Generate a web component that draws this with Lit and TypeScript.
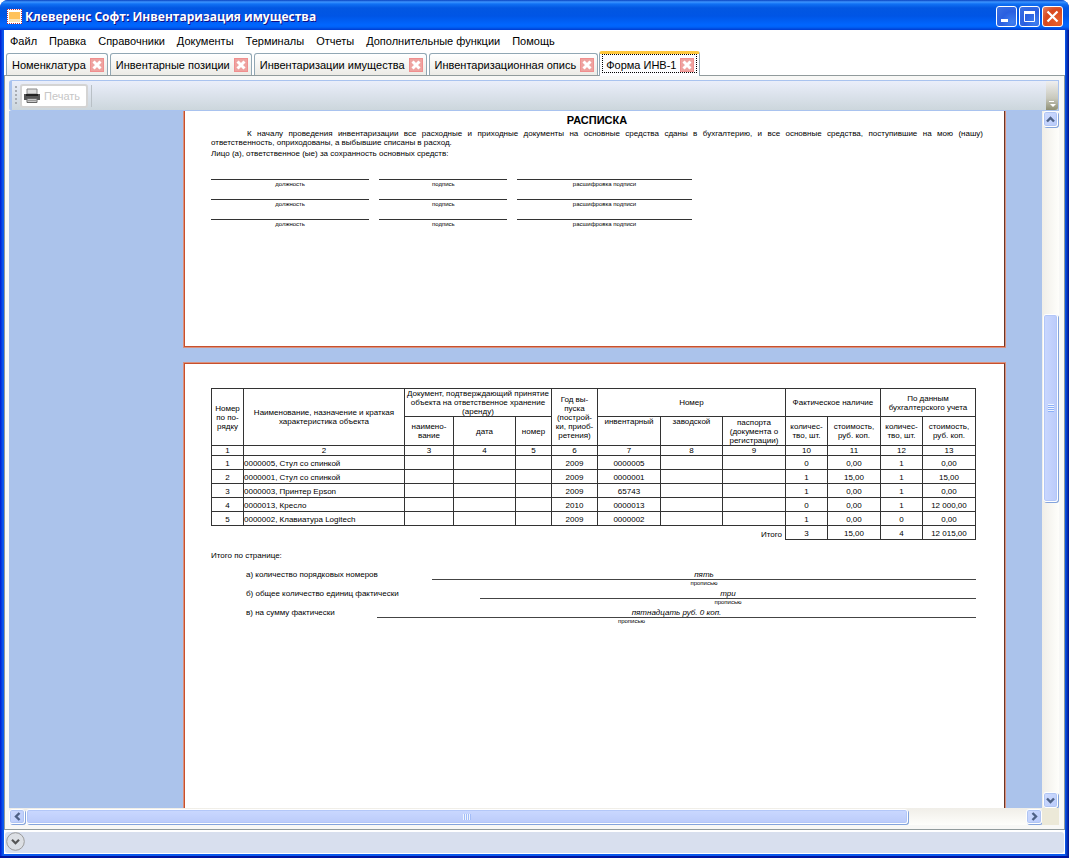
import { LitElement, html, css, svg } from "lit";
import { customElement, state } from "lit/decorators.js";
import { classMap } from "lit/directives/class-map.js";

const MENU = ["Файл", "Правка", "Справочники", "Документы", "Терминалы", "Отчеты", "Дополнительные функции", "Помощь"];
const TABS = ["Номенклатура", "Инвентарные позиции", "Инвентаризации имущества", "Инвентаризационная опись", "Форма ИНВ-1"];
const COLUMNS = [32, 161, 49, 62, 36, 46, 63, 62, 63, 42, 53, 42, 53];
const ROWS = [
  ["1", "0000005, Стул со спинкой", "", "", "", "2009", "0000005", "", "", "0", "0,00", "1", "0,00"],
  ["2", "0000001, Стул со спинкой", "", "", "", "2009", "0000001", "", "", "1", "15,00", "1", "15,00"],
  ["3", "0000003, Принтер Epson", "", "", "", "2009", "65743", "", "", "1", "0,00", "1", "0,00"],
  ["4", "0000013, Кресло", "", "", "", "2010", "0000013", "", "", "0", "0,00", "1", "12 000,00"],
  ["5", "0000002, Клавиатура Logitech", "", "", "", "2009", "0000002", "", "", "1", "0,00", "0", "0,00"],
];
const TOTAL_COLUMNS = COLUMNS.reduce((a, b) => a + b, 0);

const chevron = (dir: "up" | "down" | "left" | "right") => {
  const d = {
    up: "M3 8.5 L6.5 5 L10 8.5",
    down: "M3 4.5 L6.5 8 L10 4.5",
    left: "M8.5 3 L5 6.5 L8.5 10",
    right: "M4.5 3 L8 6.5 L4.5 10",
  }[dir];
  return html`<svg width="13" height="13" viewBox="0 0 13 13" aria-hidden="true">
    ${svg`<path d=${d} fill="none" stroke="#4d6185" stroke-width="2.4"/>`}
  </svg>`;
};

@customElement("xp-scrollbar")
export class XpScrollbar extends LitElement {
  static properties = {
    vertical: { type: Boolean, reflect: true },
    before: { type: Number },
    thumb: { type: Number },
    after: { type: Number },
  };
  declare vertical: boolean;
  declare before: number;
  declare thumb: number;
  declare after: number;

  static styles = css`
    :host { display: flex; height: 17px; background: linear-gradient(#f0eee8, #fefefb); }
    :host([vertical]) { flex-direction: column; width: 17px; height: auto; background: linear-gradient(90deg, #f0eee8, #fefefb); }
    button {
      display: grid; place-items: center; flex: none; box-sizing: border-box; width: 16px; height: 15px; margin: 1px 0; padding: 0;
      border: 1px solid #fff; border-radius: 3px; box-shadow: inset 0 0 0 1px #b0c5f3, 1px 1px 0 #84a4dc;
      background: linear-gradient(135deg, #cfdcfe, #b8cafa);
    }
    :host([vertical]) button { width: 15px; height: 16px; margin: 0 1px; }
    svg { display: block; }
    .thumb {
      display: grid; place-items: center; box-sizing: border-box; height: 15px; margin: 1px 0;
      border: 1px solid #fff; border-radius: 3px; box-shadow: inset 0 0 0 1px #b3c7f8, 1px 1px 0 #84a4dc;
      background: linear-gradient(#cad8ff, #bbcbfa);
    }
    :host([vertical]) .thumb { width: 15px; height: auto; margin: 0 1px; background: linear-gradient(90deg, #cad8ff, #bbcbfa); }
    .grip { width: 8px; height: 6px; background: repeating-linear-gradient(90deg, #eef4fe 0 1px, #a3bdf8 1px 2px); }
    :host([vertical]) .grip { width: 6px; height: 8px; background: repeating-linear-gradient(#eef4fe 0 1px, #8cb0f8 1px 2px); }
  `;

  render() {
    return html`
      <button aria-label="Назад">${chevron(this.vertical ? "up" : "left")}</button>
      <div style="flex:${this.before} 0 0"></div>
      <div class="thumb" style="flex:${this.thumb} 0 0"><div class="grip"></div></div>
      <div style="flex:${this.after} 0 0"></div>
      <button aria-label="Вперед">${chevron(this.vertical ? "down" : "right")}</button>
    `;
  }
}

@customElement("report-pages")
export class ReportPages extends LitElement {
  static styles = css`
    :host {
      display: flex; flex-direction: column; gap: 16px; min-width: 0; overflow: hidden;
      padding: 0 37px 0 175px; background: #abc3eb; color: #000;
      font: 8px/9px "Liberation Sans", Arial, sans-serif;
    }
    .page { box-sizing: border-box; border: 1px solid #c8502c; outline: 1px solid #d8917f; outline-offset: 0; border-right-color: #6b3526; background: #fff; }
    .first { flex: none; height: 236px; border-top: 0; padding: 2px 21px 0 26px; }
    .second { flex: 1 0 0; min-height: 0; overflow: hidden; border-bottom: 0; padding: 24px 28px 0 26px; }
    h1 { margin: 0 0 2px; font-size: 11px; line-height: 14px; text-align: center; }
    p { margin: 0; }
    .declare { text-align: justify; }
    .declare span { display: block; }
    .declare .full { text-indent: 36px; text-align-last: justify; }
    .person { margin-top: 2px; }
    .signs { display: grid; grid-template-columns: 158fr 128fr 174fr 281fr; column-gap: 10px; row-gap: 11px; margin-top: 21px; }
    .sign { border-top: 1px solid #333; font-size: 6px; line-height: 8px; text-align: center; }
    .sign:nth-child(3n + 1) { grid-column: 1; }
    table { width: 100%; table-layout: fixed; border-collapse: collapse; }
    th, td { height: 13px; padding: 0; border: 1px solid #333; font-weight: 400; text-align: center; vertical-align: middle; white-space: nowrap; }
    tbody td, tfoot td { vertical-align: bottom; line-height: 10px; padding-top: 3px; height: 10px; }
    .h1 th { height: 27px; }
    .h2 th { height: 28px; }
    .nums th { height: 9px; }
    .top { vertical-align: top; }
    .left { text-align: left; }
    tfoot .total { border: 0; border-top: 1px solid #333; padding-right: 3px; text-align: right; }
    .caption { margin-top: 11px; }
    .sum { display: flex; margin-top: 10px; padding-left: 35px; line-height: 9px; }
    .sum + .sum { margin-top: 2px; }
    .value { flex: 1; text-align: center; }
    .word { border-bottom: 1px solid #444; font-style: italic; }
    .hint { font-size: 6px; line-height: 7px; }
    .a { flex: 0 0 186px; }
    .b { flex: 0 0 234px; }
    .c { flex: 0 0 131px; }
    .shift { padding-right: 90px; }
  `;

  private sum(kind: string, label: string, word: string, shifted = false) {
    return html`<div class="sum">
      <span class=${kind}>${label}</span>
      <div class="value"><div class="word">${word}</div><div class=${classMap({ hint: true, shift: shifted })}>прописью</div></div>
    </div>`;
  }

  render() {
    return html`
      <section class="page first">
        <h1>РАСПИСКА</h1>
        <p class="declare"><span class="full">К началу проведения инвентаризации все расходные и приходные документы на основные средства сданы в бухгалтерию, и все основные средства, поступившие на мою (нашу)</span> <span>ответственность, оприходованы, а выбывшие списаны в расход.</span></p>
        <p class="person">Лицо (а), ответственное (ые) за сохранность основных средств:</p>
        <div class="signs">
          ${[1, 2, 3].map(() => html`<div class="sign">должность</div><div class="sign">подпись</div><div class="sign">расшифровка подписи</div>`)}
        </div>
      </section>
      <section class="page second">
        <table>
          <colgroup>${COLUMNS.map((w) => html`<col style="width:${(w / TOTAL_COLUMNS) * 100}%">`)}</colgroup>
          <thead>
            <tr class="h1">
              <th rowspan="2">Номер<br>по по-<br>рядку</th>
              <th rowspan="2">Наименование, назначение и краткая<br>характеристика объекта</th>
              <th colspan="3">Документ, подтверждающий принятие<br>объекта на ответственное хранение<br>(аренду)</th>
              <th rowspan="2">Год вы-<br>пуска<br>(построй-<br>ки, приоб-<br>ретения)</th>
              <th colspan="3">Номер</th>
              <th colspan="2">Фактическое наличие</th>
              <th colspan="2">По данным<br>бухгалтерского учета</th>
            </tr>
            <tr class="h2">
              <th>наимено-<br>вание</th><th>дата</th><th>номер</th>
              <th class="top">инвентарный</th><th class="top">заводской</th><th>паспорта<br>(документа о<br>регистрации)</th>
              <th>количес-<br>тво, шт.</th><th>стоимость,<br>руб. коп.</th><th>количес-<br>тво, шт.</th><th>стоимость,<br>руб. коп.</th>
            </tr>
            <tr class="nums">${COLUMNS.map((_, i) => html`<th>${i + 1}</th>`)}</tr>
          </thead>
          <tbody>
            ${ROWS.map((r) => html`<tr>${r.map((c, i) => html`<td class=${classMap({ left: i === 1 })}>${c}</td>`)}</tr>`)}
          </tbody>
          <tfoot>
            <tr><td class="total" colspan="9">Итого</td><td>3</td><td>15,00</td><td>4</td><td>12 015,00</td></tr>
          </tfoot>
        </table>
        <p class="caption">Итого по странице:</p>
        ${this.sum("a", "а) количество порядковых номеров", "пять")}
        ${this.sum("b", "б) общее количество единиц фактически", "три")}
        ${this.sum("c", "в) на сумму фактически", "пятнадцать руб. 0 коп.", true)}
      </section>
    `;
  }
}

@customElement("app-root")
export class AppRoot extends LitElement {
  @state() private active = 4;

  static styles = css`
    :host {
      display: flex; flex-direction: column; box-sizing: border-box; height: 100vh; overflow: hidden;
      padding: 0 4px 4px; border-radius: 8px 8px 0 0; color: #000;
      background: linear-gradient(90deg, #0019cf, #0b5aee 3px, #0b5aee calc(100% - 4px), #00138c);
      box-shadow: inset 0 -2px #00139c;
      font: 11px/14px "Liberation Sans", Tahoma, sans-serif;
    }
    button { font: inherit; color: inherit; }
    .title {
      display: flex; align-items: center; flex: none; height: 30px; margin: 0 -4px; padding: 3px 6px 0 7px; box-sizing: border-box;
      background: linear-gradient(#0842c0, #3d95ff 2px, #1071f4 4px, #0257e2 8px, #0055e5 16px, #0066ff 25px, #0062f8 27px, #003ccf 30px);
      color: #fff;
    }
    .title h1 { flex: 1; margin: 0 0 0 3px; font: 700 12px/18px "Open Sans", sans-serif; text-shadow: 1px 1px #0f1089; white-space: nowrap; }
    .title svg { display: block; }
    .win {
      width: 21px; height: 21px; margin-left: 2px; padding: 0; border: 1px solid #fff; border-radius: 3px;
      background: radial-gradient(circle at 80% 80%, #3f7ff0, #2a5fe0 50%, #3c72e4);
    }
    .exit { background: radial-gradient(circle at 80% 80%, #e8602c, #d8481e 60%, #e58468); }
    .body { display: flex; flex-direction: column; flex: 1; min-height: 0; background: #fff; }
    .menu { display: flex; flex: none; gap: 12px; padding: 4px 6px 4px; }
    .menu button { padding: 0; border: 0; background: none; }
    .tabs { display: flex; flex: none; align-items: flex-end; gap: 2px; height: 23px; padding: 0 2px; border-bottom: 1px solid #919b9c; }
    .tab {
      display: flex; align-items: center; gap: 4px; box-sizing: border-box; height: 22px; padding: 0 3px 0 5px;
      border: 1px solid #91a7b4; border-bottom: 0; border-radius: 3px 3px 0 0; background: linear-gradient(#fff, #ecebe6);
    }
    .tab.on { height: 25px; margin: 0 0 -1px -1px; border-top: 3px solid #ffc73c; background: #fcfcfe; outline: 1px dotted #000; outline-offset: -4px; padding: 0 5px 0 6px; }
    .tab button { padding: 0; border: 0; background: none; white-space: nowrap; }
    .tab svg { display: block; }
    .client { display: flex; flex-direction: column; flex: 1; min-height: 0; padding: 4px 5px 4px 4px; border-right: 1px solid #919b9c; border-bottom: 1px solid #919b9c; border-left: 1px solid #919b9c; background: #f8f8f6; }
    .tools {
      display: flex; align-items: center; flex: none; height: 31px; box-sizing: border-box; padding-left: 3px;
      border: 1px solid #a9c3ef; border-left-width: 3px; border-radius: 3px 0 0 3px; background: linear-gradient(#eaeefa, #ccd6dc);
    }
    .dots { width: 2px; height: 20px; background: repeating-linear-gradient(#a8adb4 0 2px, transparent 2px 4px); }
    .print {
      display: flex; align-items: center; gap: 4px; height: 24px; margin-left: 3px; padding: 0 6px 0 2px;
      border: 2px solid #d4d4d4; border-radius: 3px; background: #fff; color: #c6c6c6;
    }
    .rule { width: 1px; height: 22px; margin-left: 3px; background: #b9c0c6; }
    .more { display: flex; align-items: flex-end; justify-content: flex-end; align-self: stretch; width: 12px; margin-left: auto; padding: 0 2px 2px 0; box-sizing: border-box; border-radius: 0 3px 3px 0; background: linear-gradient(#efeff0, #c8c8bc 60%, #8f8f73); border: 0; }
    .view { display: grid; grid-template: minmax(0, 1fr) 17px / minmax(0, 1fr) 17px; flex: 1; min-height: 0; }
    .corner { background: #ece9d8; }
    .status { flex: none; height: 21px; margin: 2px 1px 1px; padding-left: 1px; border-radius: 3px; background: #d8dfee; }
    .status button { display: block; padding: 0; border: 0; background: none; }
    .status svg { display: block; }
  `;

  private close() {
    return html`<svg width="14" height="14" viewBox="0 0 14 14" aria-hidden="true">
      <rect width="14" height="14" fill="#f08f8f"/><rect x="1" y="1" width="12" height="12" fill="#eea3a0"/>
      <path d="M3.5 3.5 L10.5 10.5 M10.5 3.5 L3.5 10.5" stroke="#fff" stroke-width="3"/></svg>`;
  }

  render() {
    return html`
      <header class="title">
        <svg width="15" height="15" viewBox="0 0 15 15" aria-hidden="true">
          <rect width="15" height="15" fill="#fff"/>
          <path d="M0 .5h15M0 14.5h15M.5 0v15M14.5 0v15" fill="none" stroke="#c0313c" stroke-dasharray="1 1"/>
          <rect x="2" y="3" width="11" height="7" fill="#ffc25a"/><rect x="2" y="10" width="11" height="3" fill="#fbe6b8"/>
        </svg>
        <h1>Клеверенс Софт: Инвентаризация имущества</h1>
        <button class="win" aria-label="Свернуть"><svg width="19" height="19"><path d="M4 13.5h7" stroke="#fff" stroke-width="3"/></svg></button>
        <button class="win" aria-label="Развернуть"><svg width="19" height="19"><path d="M4.5 5v9.500h10V5" fill="none" stroke="#fff"/><path d="M4 5.500h11" stroke="#fff" stroke-width="3"/></svg></button>
        <button class="win exit" aria-label="Закрыть"><svg width="19" height="19"><path d="M4.500 4.500l10 10M14.500 4.500l-10 10" stroke="#fff" stroke-width="2.200"/></svg></button>
      </header>
      <div class="body">
        <nav class="menu">${MENU.map((m) => html`<button>${m}</button>`)}</nav>
        <div class="tabs">
          ${TABS.map((t, i) => html`<div class=${classMap({ tab: true, on: i === this.active })}>
            <button @click=${() => (this.active = i)}>${t}</button>
            <button aria-label="Закрыть вкладку">${this.close()}</button>
          </div>`)}
        </div>
        <main class="client">
          <div class="tools">
            <div class="dots"></div>
            <button class="print" disabled>
              <svg width="16" height="16" viewBox="0 0 16 16" aria-hidden="true">
                <path d="M3 1h10v5H3z" fill="#ddd" stroke="#888"/>
                <path d="M0 6h16v6H0z" fill="#555"/><path d="M2 6h12v2H2z" fill="#222"/>
                <path d="M3 10.500h10v4H3z" fill="#c8c8c8" stroke="#666"/><path d="M4 12.500h8" stroke="#999"/>
              </svg>Печать
            </button>
            <div class="rule"></div>
            <button class="more" aria-label="Параметры панели">
              <svg width="7" height="7" viewBox="0 0 7 7"><path d="M0 .5h5" stroke="#fff"/><path d="M1 3h6L4 6z" fill="#fff"/></svg>
            </button>
          </div>
          <div class="view">
            <report-pages></report-pages>
            <xp-scrollbar vertical .before=${188} .thumb=${186} .after=${291}></xp-scrollbar>
            <xp-scrollbar .before=${1} .thumb=${882} .after=${118}></xp-scrollbar>
            <div class="corner"></div>
          </div>
        </main>
        <footer class="status">
          <button aria-label="Показать журнал">
            <svg width="19" height="19" viewBox="0 0 19 19"><circle cx="9.500" cy="9.500" r="8.800" fill="#dcdfe4" stroke="#9a9a9a"/><path d="M6 7.800l3.500 3.500L13 7.800" fill="none" stroke="#555" stroke-width="2.200"/></svg>
          </button>
        </footer>
      </div>
    `;
  }
}
